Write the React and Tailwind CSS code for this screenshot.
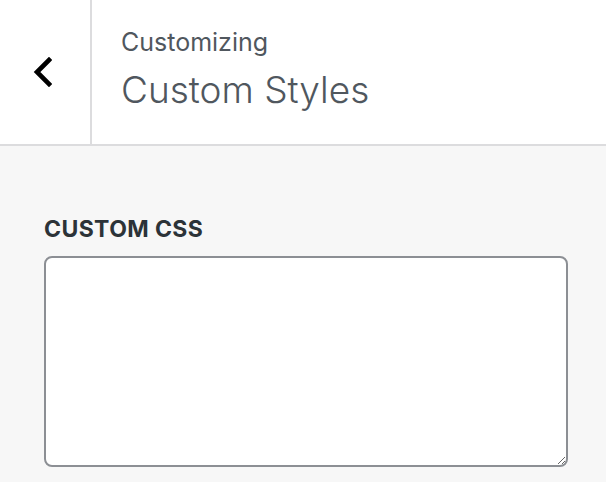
export default function App() {
  return (
    <div className="w-[606px] h-[482px] bg-[#f7f7f7] font-['Inter',sans-serif] overflow-hidden">
      {/* Header */}
      <div className="flex h-[146px] bg-white border-b-2 border-[#dcdcde]">
        <div className="w-[92px] flex items-center pl-[32px] border-r-2 border-[#dcdcde]">
          <svg width="20" height="30" viewBox="0 0 20 30" fill="none">
            <path d="M17 3 L5 15 L17 27" stroke="#000" strokeWidth="4.6" strokeLinecap="square" />
          </svg>
        </div>
        <div className="pl-[29px] pt-[26px]">
          <div className="text-[25px] leading-[32px] text-[#50575e]">Customizing</div>
          <div className="text-[37px] leading-[48px] font-light text-[#50575e] mt-[8px]">Custom Styles</div>
        </div>
      </div>

      {/* Control */}
      <div className="px-[44px] pt-[68px]">
        <div className="text-[23px] leading-[30px] font-bold text-[#2c3338] uppercase tracking-[0.4px]">Custom CSS</div>
        <textarea
          className="block mt-[12px] w-[524px] h-[211px] bg-white border-2 border-[#8c8f94] rounded-[8px] outline-none"
          defaultValue=""
        />
      </div>
    </div>
  );
}
